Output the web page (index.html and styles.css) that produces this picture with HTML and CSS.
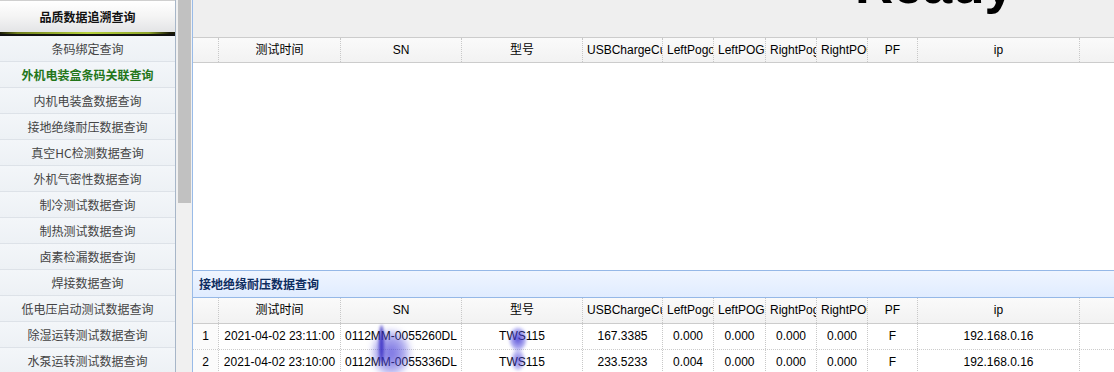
FILE: index.html
```html
<!DOCTYPE html>
<html lang="zh-CN">
<head>
    <meta charset="UTF-8">
    <title>品质数据追溯查询</title>
    <link rel="stylesheet" href="styles.css">
</head>
<body>
    <div class="app">
        <aside class="nav">
            <div class="nav-head">品质数据追溯查询</div>
            <div class="nav-accent"></div>
            <ul class="nav-list">
                <li>条码绑定查询</li>
                <li class="active">外机电装盒条码关联查询</li>
                <li>内机电装盒数据查询</li>
                <li>接地绝缘耐压数据查询</li>
                <li>真空HC检测数据查询</li>
                <li>外机气密性数据查询</li>
                <li>制冷测试数据查询</li>
                <li>制热测试数据查询</li>
                <li>卤素检漏数据查询</li>
                <li>焊接数据查询</li>
                <li>低电压启动测试数据查询</li>
                <li>除湿运转测试数据查询</li>
                <li>水泵运转测试数据查询</li>
            </ul>
        </aside>
        <div class="scrollbar"><div class="thumb"></div></div>

        <main class="main">
            <div class="status"><span class="status-text">Ready</span></div>

            <div class="grid grid-top">
                <div class="grid-row grid-head">
                    <div class="cell"></div>
                    <div class="cell">测试时间</div>
                    <div class="cell">SN</div>
                    <div class="cell">型号</div>
                    <div class="cell">USBChargeCurrent</div>
                    <div class="cell">LeftPogoVoltage</div>
                    <div class="cell">LeftPOGOCurrent</div>
                    <div class="cell">RightPogoVoltage</div>
                    <div class="cell">RightPOGOCurrent</div>
                    <div class="cell">PF</div>
                    <div class="cell">ip</div>
                    <div class="cell filler"></div>
                </div>
                <div class="grid-body"></div>
            </div>

            <section class="panel">
                <div class="panel-title">接地绝缘耐压数据查询</div>
                <div class="grid">
                    <div class="grid-row grid-head">
                        <div class="cell"></div>
                        <div class="cell">测试时间</div>
                        <div class="cell">SN</div>
                        <div class="cell">型号</div>
                        <div class="cell">USBChargeCurrent</div>
                        <div class="cell">LeftPogoVoltage</div>
                        <div class="cell">LeftPOGOCurrent</div>
                        <div class="cell">RightPogoVoltage</div>
                        <div class="cell">RightPOGOCurrent</div>
                        <div class="cell">PF</div>
                        <div class="cell">ip</div>
                        <div class="cell filler"></div>
                    </div>
                    <div class="grid-row data-row">
                        <div class="cell rownum">1</div>
                        <div class="cell">2021-04-02 23:11:00</div>
                        <div class="cell">0112MM-0055260DL</div>
                        <div class="cell">TWS115</div>
                        <div class="cell">167.3385</div>
                        <div class="cell">0.000</div>
                        <div class="cell">0.000</div>
                        <div class="cell">0.000</div>
                        <div class="cell">0.000</div>
                        <div class="cell">F</div>
                        <div class="cell">192.168.0.16</div>
                        <div class="cell filler"></div>
                    </div>
                    <div class="grid-row data-row">
                        <div class="cell rownum">2</div>
                        <div class="cell">2021-04-02 23:10:00</div>
                        <div class="cell">0112MM-0055336DL</div>
                        <div class="cell">TWS115</div>
                        <div class="cell">233.5233</div>
                        <div class="cell">0.004</div>
                        <div class="cell">0.000</div>
                        <div class="cell">0.000</div>
                        <div class="cell">0.000</div>
                        <div class="cell">F</div>
                        <div class="cell">192.168.0.16</div>
                        <div class="cell filler"></div>
                    </div>
                </div>
                <div class="smudge smudge-a"></div>
                <div class="smudge streak"></div>
                <div class="smudge smudge-b"></div>
                <div class="smudge smudge-c"></div>
            </section>
        </main>
    </div>
</body>
</html>
```

FILE: styles.css
```css
html, body {
    margin: 0;
    padding: 0;
}
body {
    width: 1114px;
    height: 372px;
    overflow: hidden;
    font-family: "Liberation Sans", Arial, "Noto Sans CJK SC", sans-serif;
    font-size: 12px;
    color: #000;
    background-color: #fff;
}
.app {
    display: flex;
    height: 372px;
}

/* left navigation */
.nav {
    width: 175px;
    flex: none;
    background-color: #eef2f6;
    border-right: 1px solid #a7b6c8;
    overflow: hidden;
}
.nav-head {
    height: 31px;
    line-height: 31px;
    border-top: 1px solid #cfcfcf;
    background: linear-gradient(to bottom, #ffffff 0%, #f4f4f4 50%, #e3e4e6 100%);
    text-align: center;
    font-family: "Noto Sans CJK SC", sans-serif;
    font-weight: bold;
    font-size: 12px;
    color: #111;
}
.nav-accent {
    height: 2px;
    background: linear-gradient(to right, #1a1a06 0%, #6f7f1d 10%, #b6d23c 50%, #8ea52a 85%, #1a1a06 97%);
    border-bottom: 2px solid #111;
}
.nav-list {
    list-style: none;
    margin: 0;
    padding: 0;
}
.nav-list li {
    height: 25px;
    line-height: 25px;
    border-bottom: 1px solid #dde2e8;
    background: linear-gradient(to bottom, #f3f6f9, #edf1f5);
    text-align: center;
    font-family: "Noto Sans CJK SC", sans-serif;
    font-size: 12px;
    color: #444;
    white-space: nowrap;
}
.nav-list li.active {
    color: #23761a;
    font-weight: bold;
}

.scrollbar {
    width: 17px;
    flex: none;
    background-color: #f0f0f0;
    border-right: 1px solid #99bbe8;
    padding-left: 2px;
    box-sizing: border-box;
}
.thumb {
    width: 13px;
    height: 203px;
    background-color: #c1c1c1;
}

/* main area */
.main {
    flex: 1;
    display: flex;
    flex-direction: column;
    min-width: 0;
}
.status {
    height: 37px;
    flex: none;
    background-color: #efefef;
    overflow: hidden;
    display: flex;
    justify-content: flex-end;
    align-items: flex-start;
    padding-right: 100px;
}
.status-text {
    display: block;
    font-size: 53px;
    line-height: 53px;
    height: 53px;
    font-weight: bold;
    margin-top: -42px;
    color: #000;
}

.grid-row {
    display: grid;
    grid-template-columns: 26px 122px 121px 121px 80px 51px 52px 51px 51px 50px 162px 1fr;
    height: 25px;
}
.cell {
    box-sizing: border-box;
    border-right: 1px dotted #c8c8c8;
    padding: 0 4px;
    line-height: 24px;
    text-align: center;
    white-space: nowrap;
    overflow: hidden;
}
.cell.filler {
    border-right: none;
}
.grid-head {
    background: linear-gradient(to bottom, #fafafa 0%, #f2f2f2 100%);
    border-bottom: 1px solid #cccccc;
}
.grid-top {
    flex: 1;
    display: flex;
    flex-direction: column;
    border-top: 1px solid #cccccc;
}
.grid-top .grid-head {
    height: 24px;
    flex: none;
}
.grid-body {
    flex: 1;
    background-color: #fff;
}
.data-row {
    border-bottom: 1px dotted #cccccc;
}
.rownum {
    background-color: #fbfbfb;
}

/* bottom panel */
.panel {
    position: relative;
    flex: none;
    height: 101px;
    border-top: 1px solid #95b8e7;
    overflow: hidden;
}
.panel-title {
    height: 26px;
    line-height: 26px;
    padding-left: 6px;
    background: linear-gradient(to bottom, #eff5ff 0%, #e0ecff 100%);
    border-bottom: 1px solid #95b8e7;
    font-family: "Noto Sans CJK SC", sans-serif;
    font-weight: bold;
    font-size: 12px;
    color: #0e2d5f;
}
.panel .grid-head {
    height: 25px;
}

/* blurred marks over the data */
.smudge {
    position: absolute;
    border-radius: 50%;
    pointer-events: none;
}
.smudge-a {
    left: 178px;
    top: 58px;
    width: 40px;
    height: 48px;
    background: radial-gradient(ellipse at center, rgba(70, 60, 215, 0.75) 0%, rgba(85, 80, 220, 0.45) 50%, rgba(120, 120, 230, 0) 78%);
    filter: blur(3px);
}
.streak {
    left: 186px;
    top: 54px;
    width: 5px;
    height: 38px;
    background-color: rgba(55, 45, 195, 0.85);
    filter: blur(1.5px);
}
.smudge-b {
    left: 316px;
    top: 56px;
    width: 18px;
    height: 24px;
    background: radial-gradient(ellipse at center, rgba(60, 50, 210, 0.85) 0%, rgba(85, 80, 225, 0.45) 55%, rgba(120, 120, 230, 0) 78%);
    filter: blur(1.5px);
}
.smudge-c {
    left: 318px;
    top: 78px;
    width: 14px;
    height: 22px;
    background: radial-gradient(ellipse at center, rgba(70, 60, 215, 0.7) 0%, rgba(90, 85, 225, 0.35) 55%, rgba(120, 120, 230, 0) 78%);
    filter: blur(1.5px);
}
```
